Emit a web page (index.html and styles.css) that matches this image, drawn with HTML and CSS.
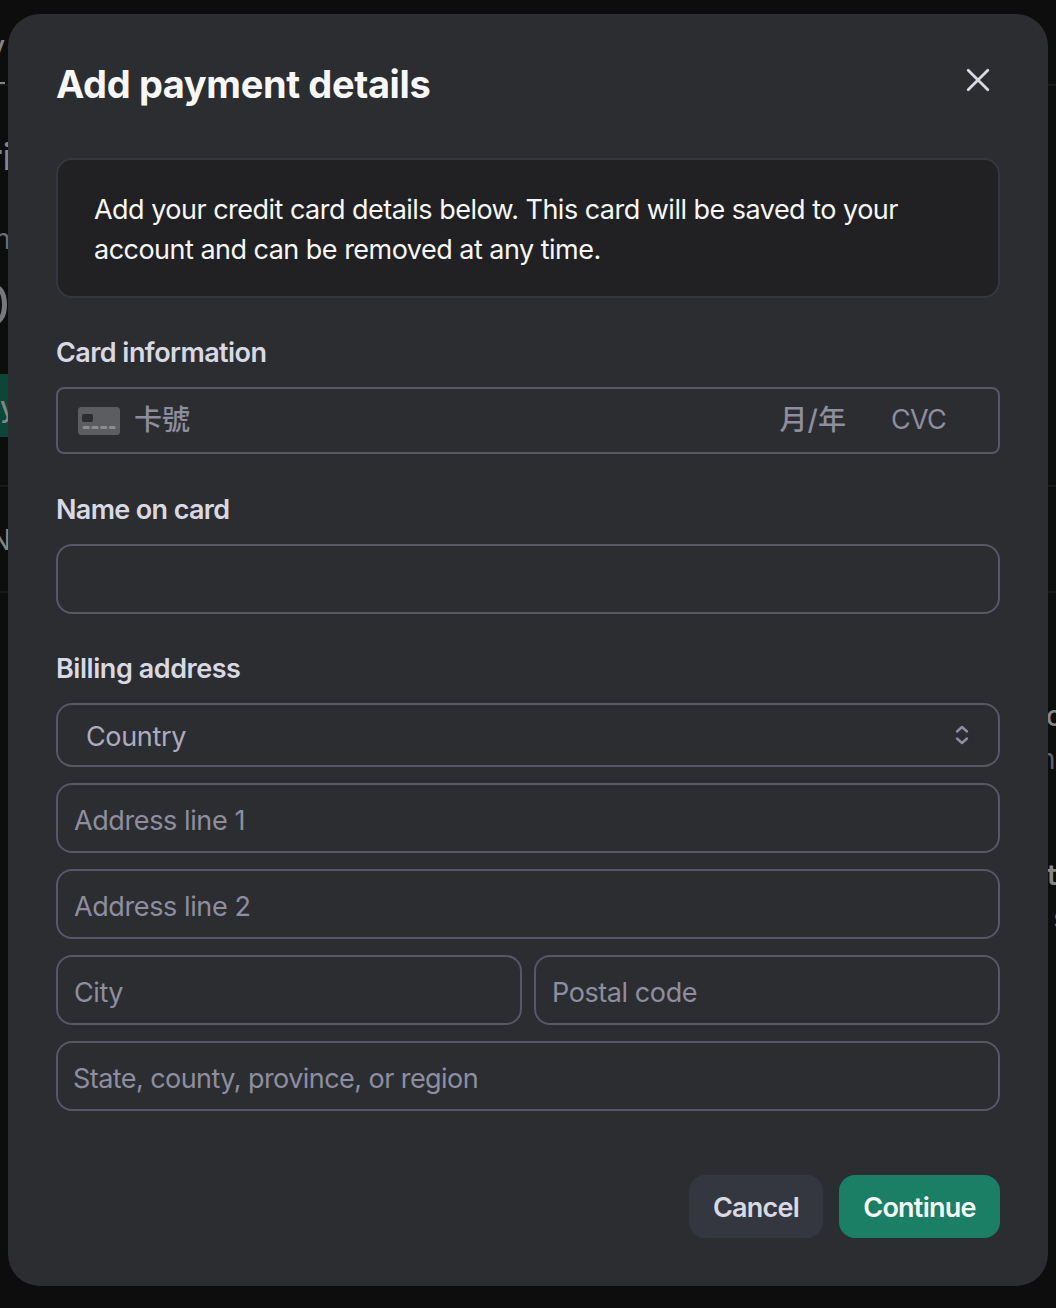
FILE: index.html
```html
<!DOCTYPE html>
<html lang="en">
<head>
<meta charset="utf-8">
<title>Add payment details</title>
<link rel="stylesheet" href="styles.css">
</head>
<body>
<div class="page" aria-hidden="true">
  <div class="rule rule-tabs"></div>
  <div class="rule rule-top"></div>
  <div class="rule rule-bottom"></div>
  <div class="tab-underline"></div>
  <span class="bit bit-tab">y</span>
  <span class="bit bit-heading">ri</span>
  <span class="bit bit-sub">m</span>
  <span class="bit bit-amount">0</span>
  <span class="bit bit-button">y</span>
  <span class="bit bit-note">N</span>
  <span class="bit bit-link1">c</span>
  <span class="bit bit-desc1">n</span>
  <span class="bit bit-link2">t</span>
  <span class="bit bit-desc2">s</span>
</div>

<form class="modal" role="dialog" aria-labelledby="title">
  <header class="modal-header">
    <h1 class="title" id="title">Add payment details</h1>
    <button class="close" type="button" aria-label="Close">
      <svg width="24" height="24" viewBox="0 0 24 24"><path d="M2.2 2.2 21.8 21.8M21.8 2.2 2.2 21.8"/></svg>
    </button>
  </header>

  <div class="notice">Add your credit card details below. This card will be saved to your<br>account and can be removed at any time.</div>

  <div class="label label-card">Card information</div>
  <div class="field card-field">
    <svg class="card-icon" width="42" height="28" viewBox="0 0 42 28">
      <rect class="card-body" width="42" height="28" rx="3.5"/>
      <rect class="card-chip" x="4" y="7" width="11" height="8" rx="2"/>
      <path class="card-digits" d="M6 20.5h4.4M14.8 20.5h4.4M23.6 20.5H28M32.2 20.5h4"/>
    </svg>
    <span class="card-number">卡號</span>
    <span class="card-expiry">月/年</span>
    <span class="card-cvc">CVC</span>
  </div>

  <div class="label label-name">Name on card</div>
  <div class="field"></div>

  <div class="label label-billing">Billing address</div>
  <div class="address">
    <div class="field select">Country
      <svg class="chevrons" width="14" height="20" viewBox="0 0 14 20"><path d="M2 6.5 7 2l5 4.5M2 13.5 7 18l5-4.5"/></svg>
    </div>
    <div class="field line">Address line 1</div>
    <div class="field line">Address line 2</div>
    <div class="pair">
      <div class="field">City</div>
      <div class="field">Postal code</div>
    </div>
    <div class="field region">State, county, province, or region</div>
  </div>

  <footer class="actions">
    <button class="btn btn-cancel" type="button">Cancel</button>
    <button class="btn btn-continue" type="button">Continue</button>
  </footer>
</form>
</body>
</html>
```
FILE: styles.css
```css
* { box-sizing: border-box; }

body {
  position: relative;
  height: 1308px;
  margin: 0;
  padding-top: 14px;
  overflow: hidden;
  background: #0d0d0d;
  color: #d9d9e3;
  font: 27px/40px Inter, "Noto Sans CJK TC", sans-serif;
}

/* Dimmed page behind the dialog */
.page { position: absolute; inset: 0; overflow: hidden; color: #858585; font-size: 28px; }
.rule { position: absolute; left: 0; right: 0; height: 2px; background: #18181c; }
.rule-tabs { top: 84px; }
.rule-top { top: 485px; }
.rule-bottom { top: 591px; }
.tab-underline { position: absolute; left: 0; top: 82px; width: 5px; height: 2px; background: #858585; }
.bit { position: absolute; line-height: 40px; }
.bit-tab { left: -11px; top: 26px; font-weight: 500; }
.bit-heading { left: -12px; top: 137px; font-size: 36px; font-weight: 600; }
.bit-sub { left: -14px; top: 219px; color: #6b6b70; }
.bit-amount { left: -25px; top: 285px; font-size: 56px; color: #77777c; }
.bit-button { left: 0; top: 374px; width: 20px; height: 63px; line-height: 66px; font-weight: 500; background: #0b4636; }
.bit-note { left: -10px; top: 520px; }
.bit-link1 { left: 1046px; top: 696px; font-weight: 500; }
.bit-desc1 { left: 1039px; top: 739px; color: #606066; }
.bit-link2 { left: 1047px; top: 855px; font-weight: 600; }
.bit-desc2 { left: 1053px; top: 898px; color: #606066; }

/* Dialog */
.modal {
  position: relative;
  width: 1040px;
  height: 1272px;
  margin: 0 8px;
  padding: 48px;
  border-radius: 32px;
  background: #2c2d31;
}

.modal-header { display: flex; justify-content: space-between; align-items: flex-start; height: 96px; }
.title {
  margin: 0;
  padding-top: 2px;
  color: #f7f7f8;
  font-size: 38px;
  font-weight: 700;
  line-height: 40px;
  letter-spacing: -0.38px;
}
.close { display: flex; margin: 6px 10px 0 0; padding: 0; border: 0; background: none; }
.close path { fill: none; stroke: #d9d9e3; stroke-width: 2.8; stroke-linecap: round; }

.notice {
  height: 140px;
  padding: 30px 36px 26px;
  border: 2px solid #353740;
  border-radius: 16px;
  background: #212123;
  color: #f7f7f8;
  letter-spacing: -0.52px;
  white-space: nowrap;
}

.label { height: 39px; font-weight: 600; white-space: nowrap; }
.label-card { margin: 35px 0 15px; letter-spacing: -0.56px; }
.label-name { margin: 36px 0 15px; letter-spacing: -0.65px; }
.label-billing { margin: 35px 0 15px; letter-spacing: -0.45px; }

.field {
  display: flex;
  align-items: center;
  height: 70px;
  padding: 6px 16px 0;
  border: 2px solid #565869;
  border-radius: 16px;
  color: #8e8ea0;
  letter-spacing: -0.42px;
  white-space: nowrap;
}
.line { letter-spacing: -0.4px; }
.region { padding-left: 15px; letter-spacing: -0.56px; }

.card-field { height: 67px; padding: 0 52px 2px 20px; border-radius: 8px; letter-spacing: 0; }
.card-icon { margin-top: 3px; }
.card-number, .card-expiry { font-size: 28px; font-weight: 500; }
.card-number { margin-left: 14px; }
.card-expiry { margin-left: auto; }
.card-cvc { margin-left: 45px; letter-spacing: -0.7px; }
.card-body { fill: #5c5d61; }
.card-chip { fill: #2c2d31; }
.card-digits { fill: none; stroke: #8c8d90; stroke-width: 3; stroke-linecap: round; }

.address { display: grid; gap: 16px; }
.pair { display: grid; grid-template-columns: 1fr 1fr; gap: 12px; }
.select { height: 64px; padding: 4px 28px 0; justify-content: space-between; color: #acacbe; letter-spacing: -0.35px; }
.chevrons { margin: -5px 1px 0 0; }
.chevrons path { fill: none; stroke: #8e8ea0; stroke-width: 2.4; stroke-linecap: round; stroke-linejoin: round; }

.actions { display: flex; justify-content: flex-end; gap: 16px; margin-top: 64px; }
.btn {
  height: 63px;
  padding: 2px 0 0;
  border: 0;
  border-radius: 16px;
  font: 600 27px/40px Inter, sans-serif;
  letter-spacing: -0.75px;
}
.btn-cancel { width: 134px; background: #343740; color: #d9d9e3; }
.btn-continue { width: 161px; background: #1a7f64; color: #f7f7f8; }
```
